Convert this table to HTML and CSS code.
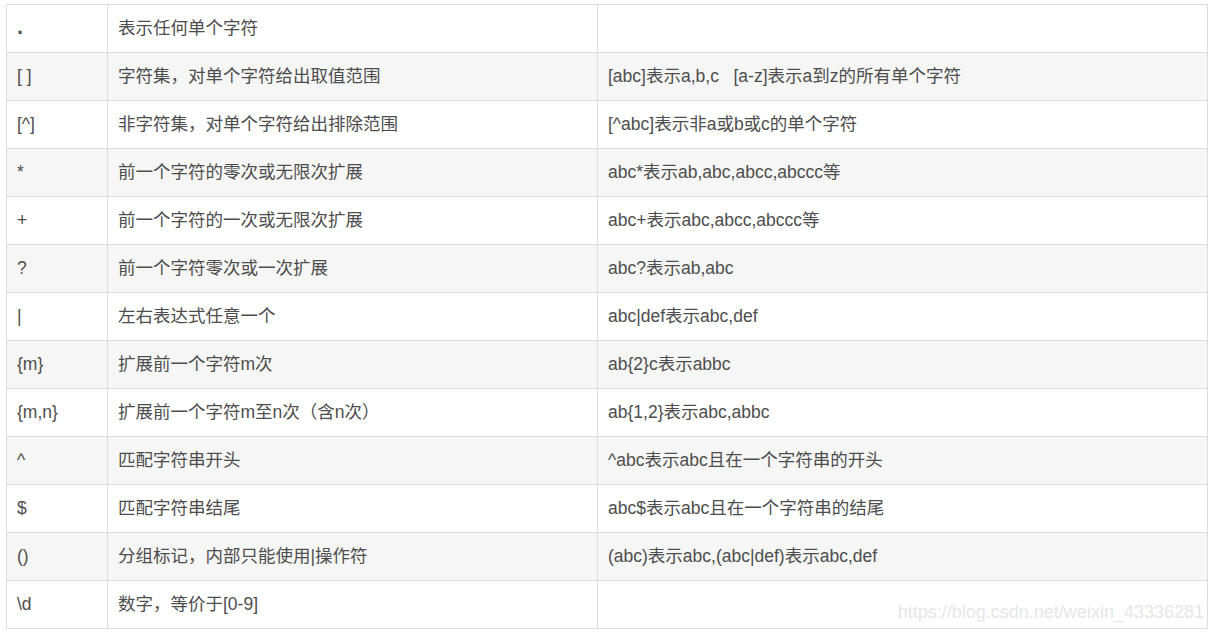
FILE: index.html
```html
<!DOCTYPE html>
<html lang="zh-CN">
<head>
  <meta charset="UTF-8" />
  <meta name="viewport" content="width=device-width, initial-scale=1.0"/>
  <title>正则表达式常用操作符</title>
  <link rel="stylesheet" href="styles.css">
</head>
<body>
  <div class="wrap">
    <table class="ops">
      <colgroup>
        <col class="c1">
        <col class="c2">
        <col class="c3">
      </colgroup>
      <tr><td><span class="dot">.</span></td><td>表示任何单个字符</td><td></td></tr>
      <tr><td>[ ]</td><td>字符集，对单个字符给出取值范围</td><td>[abc]表示a,b,c &nbsp; [a-z]表示a到z的所有单个字符</td></tr>
      <tr><td>[^]</td><td>非字符集，对单个字符给出排除范围</td><td>[^abc]表示非a或b或c的单个字符</td></tr>
      <tr><td>*</td><td>前一个字符的零次或无限次扩展</td><td>abc*表示ab,abc,abcc,abccc等</td></tr>
      <tr><td>+</td><td>前一个字符的一次或无限次扩展</td><td>abc+表示abc,abcc,abccc等</td></tr>
      <tr><td>?</td><td>前一个字符零次或一次扩展</td><td>abc?表示ab,abc</td></tr>
      <tr><td>|</td><td>左右表达式任意一个</td><td>abc|def表示abc,def</td></tr>
      <tr><td>{m}</td><td>扩展前一个字符m次</td><td>ab{2}c表示abbc</td></tr>
      <tr><td>{m,n}</td><td>扩展前一个字符m至n次（含n次）</td><td>ab{1,2}表示abc,abbc</td></tr>
      <tr><td>^</td><td>匹配字符串开头</td><td>^abc表示abc且在一个字符串的开头</td></tr>
      <tr><td>$</td><td>匹配字符串结尾</td><td>abc$表示abc且在一个字符串的结尾</td></tr>
      <tr><td>()</td><td>分组标记，内部只能使用|操作符</td><td>(abc)表示abc,(abc|def)表示abc,def</td></tr>
      <tr><td>\d</td><td>数字，等价于[0-9]</td><td class="last"><span class="mark">https://blog.csdn.net/weixin_43336281</span></td></tr>
    </table>
  </div>
</body>
</html>
```

FILE: styles.css
```css
body {
  margin: 0;
  background: #fff;
  font-family: "Liberation Sans", "Noto Sans CJK SC", sans-serif;
  color: #4d4d4d;
}
.wrap {
  padding: 4px 0 0 6px;
}
.ops {
  border-collapse: collapse;
  table-layout: fixed;
  width: 1201px;
  font-size: 17.5px;
}
.c1 { width: 101px; }
.c2 { width: 490px; }
.c3 { width: 610px; }
.ops td {
  border: 1px solid #dddddd;
  height: 48px;
  padding: 0 10px 2px;
  box-sizing: border-box;
  white-space: nowrap;
  vertical-align: middle;
  line-height: 24px;
}
.ops tr:nth-child(even) td {
  background: #f6f6f6;
}
.dot {
  font-weight: bold;
  font-size: 22px;
  color: #555;
}
.last {
  text-align: right;
  vertical-align: bottom !important;
  padding-right: 3px !important;
  padding-bottom: 4px !important;
}
.mark {
  color: #e6e6e6;
  font-size: 18px;
}
```
